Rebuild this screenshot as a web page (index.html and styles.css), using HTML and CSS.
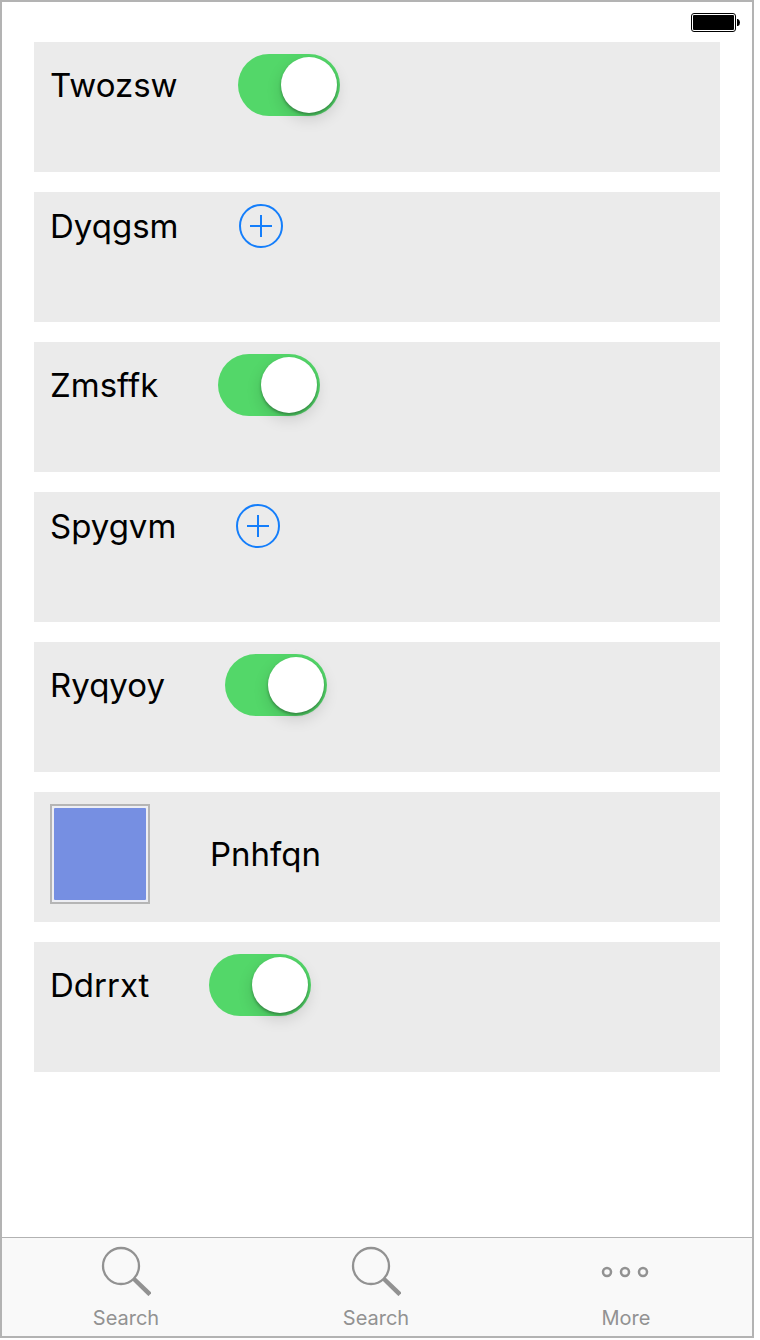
FILE: index.html
```html
<!DOCTYPE html>
<html lang="en">
<head>
<meta charset="utf-8">
<meta name="viewport" content="width=device-width, initial-scale=1">
<title>Settings</title>
<link rel="stylesheet" href="styles.css">
</head>
<body>
<div class="screen">
  <header class="status-bar">
    <svg class="battery" width="50" height="20" viewBox="0 0 50 20" role="img" aria-label="Battery full">
      <rect x="0.5" y="0.5" width="44" height="18" rx="2.5" fill="#fff" stroke="#000"/>
      <rect x="2" y="2" width="41" height="15" rx="1" fill="#000"/>
      <path d="M46 6h1q2 1 2 3.500t-2 3.500h-1z" fill="#000"/>
    </svg>
  </header>
  <main class="cards">
    <section class="card">
      <label class="label" for="twozsw">Twozsw</label>
      <input class="switch" id="twozsw" type="checkbox" role="switch" checked>
    </section>
    <section class="card">
      <span class="label" id="dyqgsm">Dyqgsm</span>
      <button class="add" type="button" aria-labelledby="dyqgsm">
        <svg width="44" height="44" viewBox="0 0 44 44" fill="none" stroke="#147efb" stroke-width="2"><circle cx="22" cy="22" r="21"/><path d="M11 22h22M22 11v22"/></svg>
      </button>
    </section>
    <section class="card">
      <label class="label" for="zmsffk">Zmsffk</label>
      <input class="switch" id="zmsffk" type="checkbox" role="switch" checked>
    </section>
    <section class="card">
      <span class="label" id="spygvm">Spygvm</span>
      <button class="add" type="button" aria-labelledby="spygvm">
        <svg width="44" height="44" viewBox="0 0 44 44" fill="none" stroke="#147efb" stroke-width="2"><circle cx="22" cy="22" r="21"/><path d="M11 22h22M22 11v22"/></svg>
      </button>
    </section>
    <section class="card">
      <label class="label" for="ryqyoy">Ryqyoy</label>
      <input class="switch" id="ryqyoy" type="checkbox" role="switch" checked>
    </section>
    <section class="card">
      <input class="swatch" id="pnhfqn" type="color" value="#768fe2">
      <label class="label" for="pnhfqn">Pnhfqn</label>
    </section>
    <section class="card">
      <label class="label" for="ddrrxt">Ddrrxt</label>
      <input class="switch" id="ddrrxt" type="checkbox" role="switch" checked>
    </section>
  </main>
  <nav class="tabs">
    <a class="tab" href="#search">
      <svg width="50" height="50" viewBox="0 0 50 50" fill="none" stroke="#929292"><circle cx="20" cy="20" r="18" stroke-width="2.300"/><path d="M33 33L49 48.500" stroke-width="4.500"/></svg>
      <span>Search</span>
    </a>
    <a class="tab" href="#search-more">
      <svg width="50" height="50" viewBox="0 0 50 50" fill="none" stroke="#929292"><circle cx="20" cy="20" r="18" stroke-width="2.300"/><path d="M33 33L49 48.500" stroke-width="4.500"/></svg>
      <span>Search</span>
    </a>
    <a class="tab" href="#more">
      <svg width="50" height="50" viewBox="0 0 50 50" fill="none" stroke="#929292" stroke-width="2.500"><circle cx="6" cy="26" r="4"/><circle cx="24" cy="26" r="4"/><circle cx="42" cy="26" r="4"/></svg>
      <span>More</span>
    </a>
  </nav>
</div>
</body>
</html>
```
FILE: styles.css
```css
* {
  box-sizing: border-box;
}

body {
  margin: 0;
  padding: 0 6px 2px 0;
  min-height: 100vh;
  display: flex;
  background: #fff;
  color: #000;
  font-family: Inter, "Liberation Sans", sans-serif;
}

.screen {
  flex: 1;
  display: flex;
  flex-direction: column;
  border: 2px solid #b3b3b3;
}

.status-bar {
  display: flex;
  justify-content: flex-end;
  height: 40px;
  padding: 11px 11px 0;
}

.cards {
  flex: 1;
  display: flex;
  flex-direction: column;
  gap: 20px;
  padding: 0 32px 20px;
}

.card {
  display: flex;
  align-items: flex-start;
  min-height: 130px;
  padding: 12px 16px;
  gap: 60px;
  background: #ebebeb;
}

.label {
  font-size: 33px;
  line-height: 44px;
  font-variant-ligatures: none;
  font-feature-settings: "calt" 0;
}

.card:has(.switch) .label {
  line-height: 62px;
}

.card:has(.swatch) .label {
  line-height: 100px;
}

.switch {
  appearance: none;
  display: flex;
  justify-content: flex-end;
  width: 102px;
  height: 62px;
  margin: 0;
  padding: 3px;
  border-radius: 31px;
  background: #53d769;
}

.switch::before {
  content: "";
  width: 56px;
  height: 56px;
  border-radius: 50%;
  background: #fff;
  box-shadow: 0 2px 3px rgba(0, 0, 0, 0.3), 0 6px 16px rgba(0, 0, 0, 0.14);
}

.switch:not(:checked) {
  justify-content: flex-start;
  background: #d4d4d4;
}

.add {
  display: flex;
  padding: 0;
  border: 0;
  background: none;
}

.swatch {
  appearance: none;
  width: 100px;
  height: 100px;
  padding: 2px;
  border: 2px solid #b5b5b5;
  background: #edeef3;
}

.swatch::-webkit-color-swatch-wrapper {
  padding: 0;
}

.swatch::-webkit-color-swatch {
  border: 0;
  border-radius: 1px;
}

.tabs {
  display: flex;
  border-top: 1px solid #b2b2b2;
  background: #f9f9f9;
}

.tab {
  flex: 1;
  display: flex;
  flex-direction: column;
  align-items: center;
  gap: 8px;
  padding: 8px 2px 4px 0;
  color: #929292;
  font-size: 20px;
  line-height: 28px;
  text-decoration: none;
}
```
